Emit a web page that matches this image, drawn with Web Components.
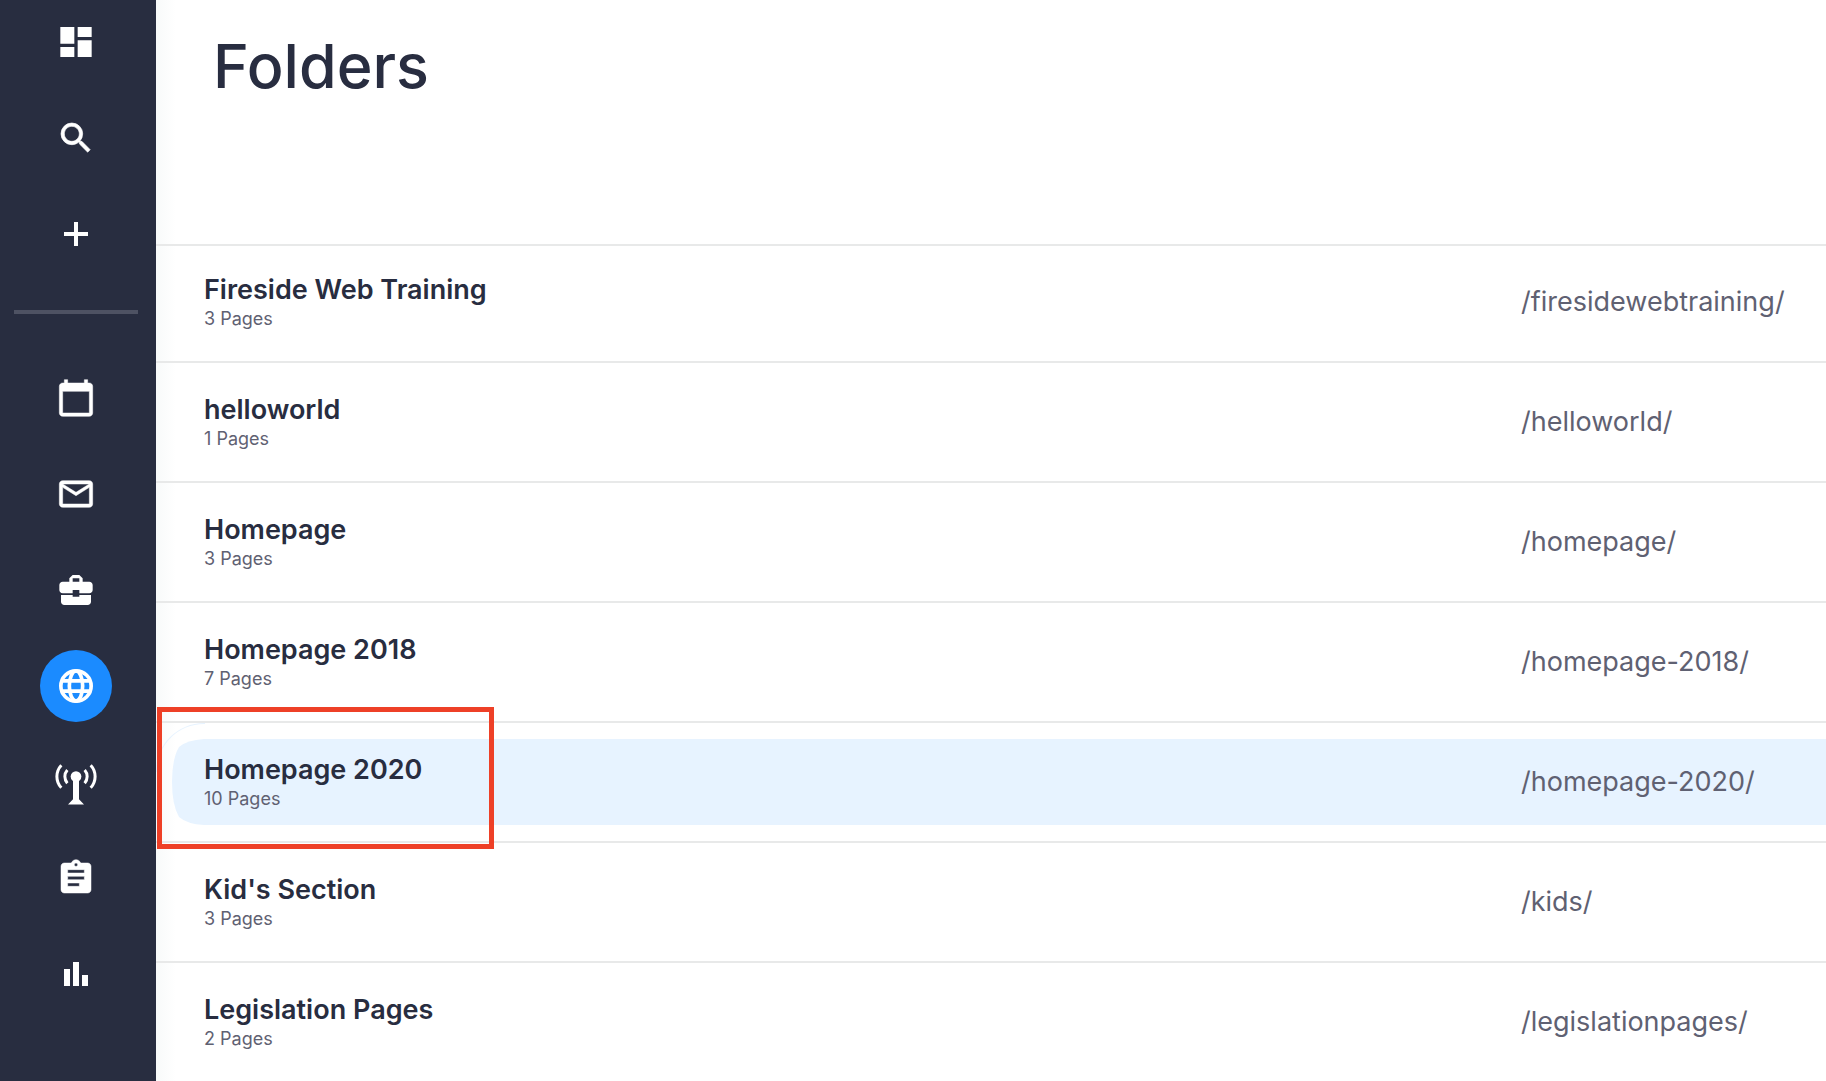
<!DOCTYPE html>
<html lang="en">
<head>
<meta charset="utf-8">
<title>Folders</title>
<style>
  body {
    margin: 0;
    background: #fff;
    color: #282d40;
    font-family: Inter, "Liberation Sans", sans-serif;
  }
</style>
</head>
<body>
<app-shell>
  <nav-rail slot="nav">
    <nav-item icon="dashboard" label="Dashboard"></nav-item>
    <nav-item icon="search" label="Search"></nav-item>
    <nav-item icon="add" label="Add"></nav-item>
    <nav-divider></nav-divider>
    <nav-item icon="calendar" label="Calendar"></nav-item>
    <nav-item icon="mail" label="Mail"></nav-item>
    <nav-item icon="briefcase" label="Casework"></nav-item>
    <nav-item icon="globe" label="Website" active></nav-item>
    <nav-item icon="antenna" label="Outreach"></nav-item>
    <nav-item icon="clipboard" label="Surveys"></nav-item>
    <nav-item icon="chart" label="Reports"></nav-item>
  </nav-rail>
  <page-header>Folders</page-header>
  <folder-table></folder-table>
</app-shell>

<script>
// All icons sit on a 24 unit grid
const ICONS = {
  dashboard: '<path d="M2.600 13H11V3H2.600v10zm0 8H11v-6H2.600v6zM13 21h8.400V11H13v10zm0-18v6h8.400V3H13z"/>',
  search: '<path stroke="currentColor" stroke-width=".4" d="M15.5 14h-.79l-.28-.27A6.47 6.47 0 0 0 16 9.5 6.5 6.5 0 1 0 9.5 16c1.61 0 3.09-.59 4.23-1.57l.27.28v.79l5 4.99L20.49 19l-4.99-5zm-6 0C7.01 14 5 11.99 5 9.5S7.01 5 9.5 5 14 7.01 14 9.5 11.99 14 9.5 14z"/>',
  add: '<path d="M19.200 13.200h-6v6h-2.400v-6h-6v-2.400h6v-6h2.400v6h6z"/>',
  calendar: '<path stroke="currentColor" stroke-width=".3" d="M20 3h-1V1h-2v2H7V1H5v2H4c-1.100 0-2 .9-2 2v16c0 1.100.9 2 2 2h16c1.100 0 2-.9 2-2V5c0-1.100-.9-2-2-2zm0 18H4V8h16v13z"/>',
  mail: '<path stroke="currentColor" stroke-width=".3" d="M22 6c0-1.100-.9-2-2-2H4c-1.100 0-2 .9-2 2v12c0 1.100.9 2 2 2h16c1.100 0 2-.9 2-2V6zm-2 0l-8 5-8-5h16zm0 12H4V8l8 5 8-5v10z"/>',
  briefcase: '<path d="M10 16v-1H3.010L3 19c0 1.110.89 2 2 2h14c1.110 0 2-.89 2-2v-4h-7v1h-4zm10-9h-4.010V5l-2-2h-4l-2 2v2H4c-1.100 0-2 .9-2 2v3c0 1.110.89 2 2 2h6v-2h4v2h6c1.100 0 2-.9 2-2V9c0-1.100-.9-2-2-2zm-6 0h-4V5h4v2z"/>',
  globe: '<g fill="none" stroke="currentColor" stroke-width="2.200"><circle cx="12" cy="12" r="9.100"/><ellipse cx="12" cy="12" rx="4" ry="9"/><path d="M3.500 8.900h17M3.500 15.100h17"/></g>',
  antenna: '<circle cx="12" cy="8.700" r="3.200"/><path d="M10.200 9h3.600v13.300l3 3.200H7.200l3-3.200z"/><g fill="none" stroke="currentColor" stroke-width="1.800"><path d="M6.800 4.800a6 6 0 0 0 0 7.900M17.200 4.800a6 6 0 0 1 0 7.900M3.200 1.900a10 10 0 0 0 0 13.600M20.800 1.900a10 10 0 0 1 0 13.600"/></g>',
  clipboard: '<path stroke="currentColor" stroke-width=".3" d="M19 3h-4.180C14.400 1.840 13.300 1 12 1s-2.400.84-2.820 2H5c-1.100 0-2 .9-2 2v14c0 1.100.9 2 2 2h14c1.100 0 2-.9 2-2V5c0-1.100-.9-2-2-2zm-7 0c.55 0 1 .45 1 1s-.45 1-1 1-1-.45-1-1 .45-1 1-1zm2 14H7v-2h7v2zm3-4H7v-2h10v2zm0-4H7V7h10v2z"/>',
  chart: '<path d="M4.800 9h3.600v10.200H4.800zM10.200 4.800h3.600v14.400h-3.600zM15.600 12.600h3.600v6.600h-3.600z"/>'
};

const FOLDERS = [
  { name: 'Fireside Web Training', pages: 3, path: '/firesidewebtraining/' },
  { name: 'helloworld', pages: 1, path: '/helloworld/' },
  { name: 'Homepage', pages: 3, path: '/homepage/' },
  { name: 'Homepage 2018', pages: 7, path: '/homepage-2018/' },
  { name: 'Homepage 2020', pages: 10, path: '/homepage-2020/', selected: true },
  { name: "Kid's Section", pages: 3, path: '/kids/' },
  { name: 'Legislation Pages', pages: 2, path: '/legislationpages/' }
];

class AppShell extends HTMLElement {
  constructor() {
    super();
    this.attachShadow({ mode: 'open' });
    this.shadowRoot.innerHTML = `
      <style>
        :host {
          display: grid;
          grid-template-columns: auto minmax(0, 1fr);
          height: 100vh;
          overflow: hidden;
        }
        main {
          overflow: hidden;
          background: linear-gradient(to right, #f8fafa, #fff 20px);
        }
      </style>
      <slot name="nav"></slot>
      <main><slot></slot></main>
    `;
  }
}

class NavRail extends HTMLElement {
  constructor() {
    super();
    this.attachShadow({ mode: 'open' });
    this.shadowRoot.innerHTML = `
      <style>
        :host {
          display: block;
          width: 156px;
          background: #282d40;
        }
        nav {
          display: flex;
          flex-direction: column;
          gap: 24px;
          padding: 6px 18px 0 14px;
        }
      </style>
      <nav aria-label="Main"><slot></slot></nav>
    `;
  }
}

class NavDivider extends HTMLElement {
  constructor() {
    super();
    this.attachShadow({ mode: 'open' });
    this.shadowRoot.innerHTML = `
      <style>
        :host {
          display: block;
          height: 4px;
          margin: 16px 0 24px;
          background: #4e5263;
        }
      </style>
    `;
  }
}

class NavItem extends HTMLElement {
  constructor() {
    super();
    this.attachShadow({ mode: 'open' });
  }

  connectedCallback() {
    this.shadowRoot.innerHTML = `
      <style>
        :host { display: flex; justify-content: center; }
        a {
          display: flex;
          align-items: center;
          justify-content: center;
          width: 72px;
          height: 72px;
          border-radius: 50%;
          color: #fff;
        }
        :host([active]) a { background: #1b8bff; }
        svg {
          display: block;
          width: 40px;
          height: 40px;
          fill: currentColor;
          overflow: visible;
        }
      </style>
      <a href="#" aria-label="${this.getAttribute('label')}">
        <svg viewBox="0 0 24 24" aria-hidden="true">${ICONS[this.getAttribute('icon')]}</svg>
      </a>
    `;
  }
}

class PageHeader extends HTMLElement {
  constructor() {
    super();
    this.attachShadow({ mode: 'open' });
    this.shadowRoot.innerHTML = `
      <style>
        :host { display: block; padding: 26px 57px 138px; }
        h1 { margin: 0; font-size: 61px; line-height: 80px; font-weight: 500; }
      </style>
      <h1><slot></slot></h1>
    `;
  }
}

class FolderTable extends HTMLElement {
  constructor() {
    super();
    this.attachShadow({ mode: 'open' });
  }

  connectedCallback() {
    const rows = FOLDERS.map((f) => `
      <tr class="${f.selected ? 'selected' : ''}">
        <td>
          <div class="name">${f.name}</div>
          <div class="pages">${f.pages} Pages</div>
          ${f.selected ? '<div class="callout"></div>' : ''}
        </td>
        <td class="path">${f.path}</td>
      </tr>`).join('');

    this.shadowRoot.innerHTML = `
      <style>
        :host { display: block; border-top: 2px solid #e8e9e9; }
        table { width: 100%; border-collapse: separate; border-spacing: 0; }
        td {
          position: relative;
          padding: 28px 0 32px 48px;
          border-bottom: 2px solid #e8e9e9;
          vertical-align: middle;
        }
        .name { font-size: 27px; line-height: 38px; font-weight: 600; }
        .pages { font-size: 18px; line-height: 20px; color: #5f6172; }
        td.path {
          width: 305px;
          padding: 28px 0;
          font-size: 27px;
          line-height: 34px;
          color: #5f6172;
        }
        tr:first-child td { padding-top: 25px; }

        /* the pill is inset 16px from the row's edges */
        .selected .path {
          background: linear-gradient(#e7f3ff, #e7f3ff) 0 16px / 100% 86px no-repeat;
        }
        .selected td:first-child { z-index: 0; }
        .selected td:first-child::before {
          content: "";
          position: absolute;
          inset: 16px 0 16px 16px;
          z-index: -1;
          background: #e7f3ff;
          clip-path: path("M4000 0H32Q15 1 7 8Q0 20 0 43Q0 66 7 78Q15 85 32 86H4000Z");
        }
        .selected td:first-child::after {
          content: "";
          position: absolute;
          top: 0;
          left: 0;
          z-index: -1;
          width: 48px;
          height: 48px;
          border-top: 1px solid #e7f3ff;
          border-left: 1px solid #e7f3ff;
          border-radius: 48px 0 0 0;
        }
        .callout {
          position: absolute;
          top: -16px;
          bottom: -8px;
          left: 1px;
          width: 327px;
          border: 5px solid #ee4027;
        }
      </style>
      <table aria-label="Folders"><tbody>${rows}</tbody></table>
    `;
  }
}

customElements.define('app-shell', AppShell);
customElements.define('nav-rail', NavRail);
customElements.define('nav-divider', NavDivider);
customElements.define('nav-item', NavItem);
customElements.define('page-header', PageHeader);
customElements.define('folder-table', FolderTable);
</script>
</body>
</html>
